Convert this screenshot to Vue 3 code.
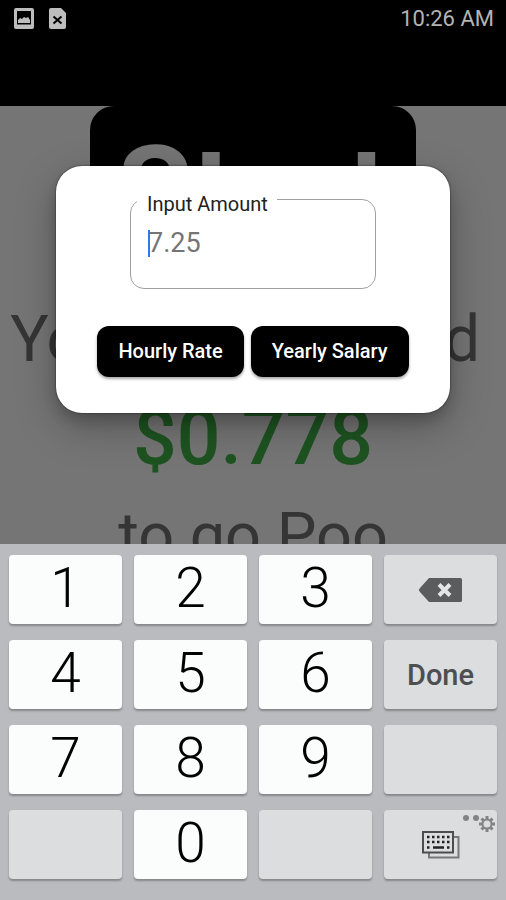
<script setup>
import { ref } from 'vue'

const amount = ref('')

const keys = [
  { label: '1' }, { label: '2' }, { label: '3' }, { icon: 'backspace', name: 'Backspace' },
  { label: '4' }, { label: '5' }, { label: '6' }, { label: 'Done', action: true },
  { label: '7' }, { label: '8' }, { label: '9' }, { blank: true },
  { blank: true }, { label: '0' }, { blank: true }, { icon: 'switch', name: 'Switch keyboard' },
]

function press(key) {
  if (key.icon === 'backspace') amount.value = amount.value.slice(0, -1)
  else if (key.label && !key.action) amount.value += key.label
}
</script>

<template>
  <div class="screen">
    <div class="app">
      <header class="status">
        <svg class="status-icon" viewBox="0 0 20 21" aria-hidden="true">
          <path fill-rule="evenodd" d="M2 0h16a2 2 0 0 1 2 2v17a2 2 0 0 1-2 2H2a2 2 0 0 1-2-2V2a2 2 0 0 1 2-2zM3 3v13.500h14V3z" />
          <path d="M4 15v-3l2-2 2 1 2-2 2 1 2-1 2 3v3z" />
        </svg>
        <svg class="status-icon file" viewBox="0 0 17 21" aria-hidden="true">
          <path d="M2 0h10l5 5v14a2 2 0 0 1-2 2H2a2 2 0 0 1-2-2V2a2 2 0 0 1 2-2z" />
          <path class="cross" d="M4.500 8.500l8 7M12.500 8.500l-8 7" />
        </svg>
        <time class="clock">10:26 AM</time>
      </header>
      <div class="bar"></div>
      <main class="content">
        <button class="start" type="button">Start</button>
        <p class="line lead">{{ 'You have earned ' }}</p>
        <p class="money">$0.778</p>
        <p class="line">to go Poo</p>
      </main>
      <div class="scrim">
        <form class="dialog" role="dialog" aria-label="Input Amount" @submit.prevent>
          <fieldset class="field">
            <legend><label for="amount">Input Amount</label></legend>
            <div class="entry">
              <span v-if="!amount" class="caret"></span>
              <input id="amount" v-model="amount" type="text" inputmode="numeric" placeholder="7.25" />
            </div>
          </fieldset>
          <div class="actions">
            <button type="submit">Hourly Rate</button>
            <button type="submit">Yearly Salary</button>
          </div>
        </form>
      </div>
    </div>

    <section class="keyboard" aria-label="Numeric keyboard">
      <button
        v-for="(key, i) in keys"
        :key="i"
        type="button"
        class="key"
        :class="{ grey: key.blank || key.icon || key.action, action: key.action }"
        :disabled="key.blank"
        :aria-label="key.name"
        @click="press(key)"
      >
        <svg v-if="key.icon === 'backspace'" class="backspace" viewBox="0 0 43 24" aria-hidden="true">
          <path d="M10 0h31.500a1.500 1.500 0 0 1 1.500 1.500v21a1.500 1.500 0 0 1-1.500 1.500H10L1 14q-2-2 0-4z" />
          <path class="x" d="M20 6.500l11 11M31 6.500l-11 11" />
        </svg>
        <template v-else-if="key.icon === 'switch'">
          <svg class="boards" viewBox="0 0 38 28" aria-hidden="true">
            <path class="back" d="M32 6h4.500v20.500H7V22" />
            <rect class="front" x="1" y="1" width="30" height="20.500" />
            <path class="dots" d="M5 6h23M5 11h23" />
            <path class="space" d="M5 16.500h2.500M11 16.500h11M25 16.500h2.500" />
          </svg>
          <svg class="hint" viewBox="0 0 34 18" aria-hidden="true">
            <circle cx="4" cy="4" r="3" />
            <circle cx="14" cy="4" r="3" />
            <circle class="ring" cx="25" cy="10" r="4.500" />
            <path class="teeth" d="M25 5V2M25 15v3M20 10h-3M30 10h3M21.500 6.500l-2-2M28.500 6.500l2-2M21.500 13.500l-2 2M28.500 13.500l2 2" />
          </svg>
        </template>
        <template v-else>{{ key.label }}</template>
      </button>
    </section>
  </div>
</template>

<style>
body {
  margin: 0;
  background: #000;
}
</style>

<style scoped>
.screen {
  display: flex;
  flex-direction: column;
  height: 100vh;
  font-family: Roboto, "Liberation Sans", sans-serif;
}

button {
  font-family: inherit;
  border: 0;
  padding: 0;
}

.app {
  position: relative;
  display: flex;
  flex-direction: column;
  flex: 1;
  min-height: 0;
  overflow: hidden;
  background: #fff;
}

.status {
  display: flex;
  align-items: center;
  flex: none;
  gap: 15px;
  height: 36px;
  padding: 0 12px 0 14px;
  background: #000;
}

.status-icon {
  width: 20px;
  height: 21px;
  fill: #bdbdbd;
}

.status-icon.file {
  width: 17px;
}

.cross {
  fill: none;
  stroke: #000;
  stroke-width: 2;
}

.clock {
  margin-left: auto;
  color: #b4b4b4;
  font-size: 22px;
}

.bar {
  flex: none;
  height: 70px;
  background: #000;
}

.content {
  display: flex;
  flex-direction: column;
  align-items: center;
}

.start {
  flex: none;
  height: 185px;
  padding: 0 27px 16px;
  border-radius: 24px;
  background: #000;
  color: #fff;
  font-size: 123px;
  font-weight: 700;
  line-height: 160px;
}

.line,
.money {
  flex: none;
  margin: 0;
  white-space: pre;
}

.line {
  color: #737373;
  font-size: 63px;
  line-height: 98px;
}

.line.lead {
  font-size: 64px;
}

.money {
  color: #43b649;
  font-size: 77px;
  font-weight: 500;
  line-height: 98px;
}

.scrim {
  position: absolute;
  inset: 34px 0 0;
  display: flex;
  align-items: center;
  padding: 0 56px;
  background: rgba(0, 0, 0, 0.54);
}

.dialog {
  box-sizing: border-box;
  flex: 1;
  display: flex;
  flex-direction: column;
  align-items: center;
  gap: 37px;
  padding: 20px 16px 36px;
  border-radius: 26px;
  background: #fff;
  box-shadow: 0 14px 40px rgba(0, 0, 0, 0.25), 0 8px 14px rgba(0, 0, 0, 0.18), 0 0 2px rgba(0, 0, 0, 0.7);
}

.field {
  box-sizing: border-box;
  width: 246px;
  max-width: 100%;
  margin: 0;
  padding: 11px 16px 27px;
  border: 1px solid #a0a0a0;
  border-radius: 14px;
}

.field legend {
  margin-left: -10px;
  padding: 8px 9px 0 10px;
  color: #222;
  font-size: 20px;
  line-height: 20px;
}

.entry {
  position: relative;
  display: flex;
}

.entry input {
  width: 100%;
  height: 36px;
  padding: 0 1px;
  border: 0;
  outline: 0;
  background: none;
  color: #222;
  font: 400 27px/36px Roboto, "Liberation Sans", sans-serif;
}

.entry input::placeholder {
  color: #757575;
  opacity: 1;
}

.caret {
  position: absolute;
  left: 1px;
  top: 5px;
  width: 2px;
  height: 27px;
  background: #2b7bf0;
}

.actions {
  display: flex;
  gap: 7px;
}

.actions button {
  height: 51px;
  padding: 0 21px;
  border-radius: 12px;
  background: #000;
  color: #fff;
  font-size: 20px;
  font-weight: 500;
  white-space: nowrap;
  box-shadow: 0 2px 3px rgba(0, 0, 0, 0.35);
}

.keyboard {
  position: relative;
  display: grid;
  grid-template-columns: repeat(4, 1fr);
  gap: 16px 12px;
  flex: none;
  padding: 11px 9px 21px;
  background: #b9bbbf;
}

.key {
  position: relative;
  display: flex;
  align-items: center;
  justify-content: center;
  height: 69px;
  padding-bottom: 3px;
  border-radius: 4px;
  background: #fbfcfc;
  color: #000;
  font-size: 55px;
  font-weight: 300;
  box-shadow: 0 2px 2px #85878a;
}

.key.grey {
  padding-bottom: 0;
  background: #dbdddf;
}

.key.action {
  color: #4c4e4f;
  font-size: 29px;
  font-weight: 500;
}

.backspace {
  width: 43px;
  height: 24px;
  fill: #5b5c5d;
}

.backspace .x {
  stroke: #e4e5e6;
  stroke-width: 4;
}

.boards {
  width: 38px;
  height: 28px;
  fill: none;
  stroke: #4b4c4d;
}

.boards .back {
  stroke-width: 2;
  stroke: #777879;
}

.boards .front {
  stroke-width: 2;
}

.boards .dots {
  stroke: #222;
  stroke-width: 2.500;
  stroke-dasharray: 2.500 2.500;
}

.boards .space {
  stroke: #222;
  stroke-width: 2.500;
}

.hint {
  position: absolute;
  top: 4px;
  right: 1px;
  width: 34px;
  height: 18px;
  fill: #828385;
}

.hint .ring {
  fill: none;
  stroke: #828385;
  stroke-width: 2;
}

.hint .teeth {
  stroke: #828385;
  stroke-width: 3;
}
</style>
